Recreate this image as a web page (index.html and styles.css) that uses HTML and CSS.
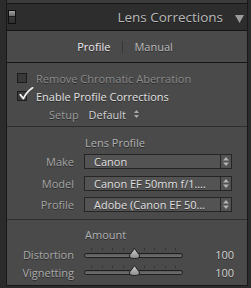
FILE: index.html
```html
<!DOCTYPE html>
<html lang="en">
<head>
  <meta charset="UTF-8" />
  <title>Lens Corrections</title>
  <link rel="stylesheet" href="styles.css">
</head>
<body>
  <div class="panel">
    <div class="strip"></div>

    <div class="head">
      <span class="switch"></span>
      <span class="title">Lens Corrections</span>
      <svg class="caret" width="9" height="8" viewBox="0 0 9 8"><path d="M0 0 H9 L4.5 8 Z" fill="#9b9b9b"/></svg>
    </div>

    <div class="tabs">
      <span class="tab active">Profile</span>
      <span class="tab-sep"></span>
      <span class="tab">Manual</span>
    </div>

    <div class="section checks">
      <div class="check off">
        <span class="box"></span>
        <span>Remove Chromatic Aberration</span>
      </div>
      <div class="check on">
        <span class="box">
          <svg class="tick" width="16" height="14" viewBox="0 0 16 14"><path d="M2.2 7.6 L5.4 11.6 C7.5 7.2 10.4 3.6 14.6 0.8" fill="none" stroke="#f0f0f0" stroke-width="1.7" stroke-linecap="round" stroke-linejoin="round"/></svg>
        </span>
        <span>Enable Profile Corrections</span>
      </div>
      <div class="setup">
        <span class="lbl">Setup</span>
        <span class="setup-val">Default</span>
        <svg width="5" height="8" viewBox="0 0 5 8"><path d="M2.5 0 L5 3 H0 Z M0 5 H5 L2.5 8 Z" fill="#a8a8a8"/></svg>
      </div>
    </div>

    <div class="section profile">
      <div class="subtitle">Lens Profile</div>
      <div class="select-row">
        <span class="lbl">Make</span>
        <div class="select">
          <span class="select-text">Canon</span>
          <span class="arrows"><svg width="6" height="9" viewBox="0 0 6 9"><path d="M3 0 L6 3.5 H0 Z M0 5.5 H6 L3 9 Z" fill="#b4b4b4"/></svg></span>
        </div>
      </div>
      <div class="select-row">
        <span class="lbl">Model</span>
        <div class="select">
          <span class="select-text">Canon EF 50mm f/1.…</span>
          <span class="arrows"><svg width="6" height="9" viewBox="0 0 6 9"><path d="M3 0 L6 3.5 H0 Z M0 5.5 H6 L3 9 Z" fill="#b4b4b4"/></svg></span>
        </div>
      </div>
      <div class="select-row">
        <span class="lbl">Profile</span>
        <div class="select">
          <span class="select-text">Adobe (Canon EF 50…</span>
          <span class="arrows"><svg width="6" height="9" viewBox="0 0 6 9"><path d="M3 0 L6 3.5 H0 Z M0 5.5 H6 L3 9 Z" fill="#b4b4b4"/></svg></span>
        </div>
      </div>
    </div>

    <div class="section amount">
      <div class="subtitle">Amount</div>
      <div class="slider-row">
        <span class="lbl">Distortion</span>
        <div class="slider">
          <div class="ticks"><i></i><i></i><i></i><i></i><i></i><i></i><i></i><i></i><i></i></div>
          <div class="track"></div>
          <svg class="thumb" width="11" height="11" viewBox="0 0 11 11">
            <defs><linearGradient id="tg" x1="0" y1="0" x2="0" y2="1"><stop offset="0" stop-color="#cfcfcf"/><stop offset="1" stop-color="#8a8a8a"/></linearGradient></defs>
            <path d="M5.5 0.5 L8.8 5 Q10.5 6.8 10.5 8 Q10.5 10.5 5.5 10.5 Q0.5 10.5 0.5 8 Q0.5 6.8 2.2 5 Z" fill="url(#tg)" stroke="#1d1d1d"/>
          </svg>
        </div>
        <span class="num">100</span>
      </div>
      <div class="slider-row">
        <span class="lbl">Vignetting</span>
        <div class="slider second">
          <div class="ticks"><i></i><i></i><i></i><i></i><i></i><i></i><i></i><i></i><i></i></div>
          <div class="track"></div>
          <svg class="thumb" width="11" height="11" viewBox="0 0 11 11">
            <path d="M5.5 0.5 L8.8 5 Q10.5 6.8 10.5 8 Q10.5 10.5 5.5 10.5 Q0.5 10.5 0.5 8 Q0.5 6.8 2.2 5 Z" fill="url(#tg)" stroke="#1d1d1d"/>
          </svg>
        </div>
        <span class="num">100</span>
      </div>
    </div>
  </div>
</body>
</html>
```

FILE: styles.css
```css
body {
  margin: 0;
  background-color: #2b2b2b;
  font-family: "Open Sans", "Liberation Sans", sans-serif;
  font-size: 11px;
  overflow: hidden;
}

.panel {
  box-sizing: border-box;
  width: 242px;
  margin-left: 6px;
  border-left: 1px solid #191919;
  border-right: 1px solid #191919;
  border-bottom: 1px solid #191919;
  background-color: #4a4a4a;
  text-shadow: 0 1px 0 rgba(0, 0, 0, 0.45);
}

.strip {
  height: 3px;
  background-color: #3b3b3b;
  border-bottom: 1px solid #161616;
}

/* header */
.head {
  height: 26px;
  display: flex;
  align-items: center;
  background-color: #2d2d2d;
  border-bottom: 1px solid #161616;
}

.switch {
  box-sizing: border-box;
  width: 8px;
  height: 14px;
  margin: 0 0 0 1px;
  border: 1px solid #0f0f0f;
  background: linear-gradient(#a2a2a2, #6a6a6a 42%, #1c1c1c 42%, #1c1c1c 50%, #383838 50%, #2f2f2f);
}

.title {
  margin-left: auto;
  font-size: 13.5px;
  line-height: 18px;
  color: #b9b9b9;
}

.caret {
  margin: 3px 3px 0 12px;
}

/* tabs */
.tabs {
  height: 31px;
  display: flex;
  align-items: center;
  justify-content: center;
  padding-right: 4px;
  border-bottom: 1px solid #161616;
}

.tab {
  color: #bdbdbd;
  line-height: 16px;
}

.tab.active {
  color: #ececec;
}

.tab-sep {
  width: 1px;
  height: 12px;
  margin: 1px 11px 0 12px;
  background-color: #363636;
}

/* sections */
.section {
  border-bottom: 1px solid #2e2e2e;
}

.section:last-child {
  border-bottom: none;
}

.checks {
  height: 64px;
  box-sizing: border-box;
  padding: 6px 0 4px;
}

.check, .setup {
  height: 18px;
  display: flex;
  align-items: center;
}

.check .box {
  position: relative;
  box-sizing: border-box;
  width: 10px;
  height: 10px;
  margin: 0 9px 0 10px;
  border: 1px solid #1c1c1c;
  background-color: #393939;
}

.tick {
  position: absolute;
  left: 0;
  top: -5px;
}

.check.off {
  color: #8c8c8c;
}

.check.on {
  color: #e2e2e2;
}

.setup {
  padding-left: 42px;
}

.setup .lbl {
  color: #9c9c9c;
  margin-right: 10px;
}

.setup-val {
  color: #d2d2d2;
  margin-right: 8px;
}

.subtitle {
  padding-left: 78px;
  line-height: 18px;
  color: #b2b2b2;
}

.profile {
  height: 93px;
  box-sizing: border-box;
  padding-top: 7px;
}

.profile .subtitle {
  margin-bottom: 2px;
}

.select-row {
  display: flex;
  align-items: center;
  height: 15px;
  margin-bottom: 6.5px;
}

.lbl {
  color: #a6a6a6;
}

.select-row .lbl, .slider-row .lbl {
  width: 67px;
  margin-right: 10px;
  text-align: right;
}

.select {
  box-sizing: border-box;
  width: 148px;
  height: 15px;
  display: flex;
  border: 1px solid #252525;
  background-color: #535353;
}

.select-text {
  flex: 1;
  padding-left: 9px;
  line-height: 13px;
  color: #e0e0e0;
  white-space: nowrap;
  overflow: hidden;
}

.arrows {
  width: 10px;
  display: flex;
  align-items: center;
  justify-content: center;
  border-left: 1px solid #252525;
}

.amount {
  padding-top: 6px;
  padding-bottom: 4px;
}

.amount .subtitle {
  margin-bottom: 1px;
}

.slider-row {
  display: flex;
  align-items: center;
  height: 18px;
}

.slider-row .lbl {
  color: #ababab;
}

.slider {
  position: relative;
  width: 99px;
  height: 18px;
}

.ticks {
  position: absolute;
  left: 7px;
  right: 7px;
  top: 3px;
  height: 2px;
  display: flex;
  justify-content: space-between;
}

.ticks i {
  width: 1px;
  height: 2px;
  background-color: #323232;
}

.track {
  position: absolute;
  left: 0;
  right: 0;
  top: 8px;
  height: 5px;
  box-sizing: border-box;
  border: 1px solid #1e1e1e;
  border-radius: 3px;
  background: linear-gradient(#5a5a5a, #707070);
}

.slider.second .track {
  top: 7px;
}

.thumb {
  position: absolute;
  left: 45px;
  top: 3px;
}

.slider.second .thumb {
  top: 2px;
}

.num {
  width: 51px;
  text-align: right;
  color: #d2d2d2;
}
```
